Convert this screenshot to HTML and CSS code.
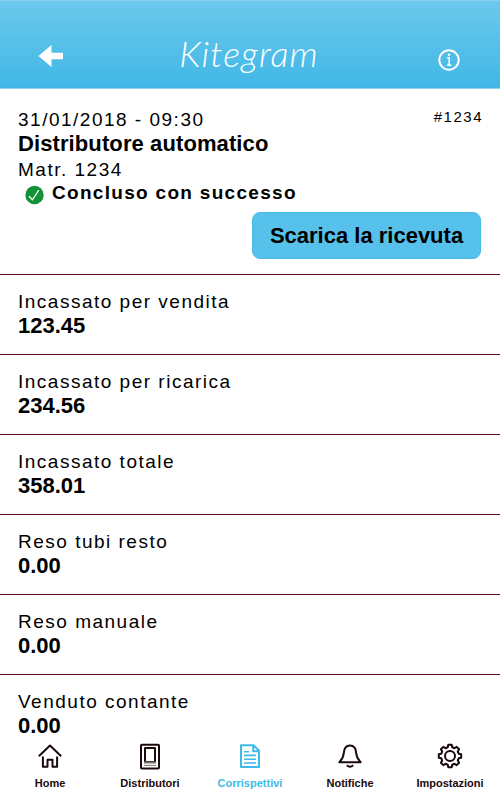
FILE: index.html
```html
<!DOCTYPE html>
<html lang="it">

<head>
  <meta charset="UTF-8">
  <meta name="viewport" content="width=device-width, initial-scale=1">
  <title>Kitegram</title>
  <link rel="stylesheet" href="styles.css">
</head>

<body>
  <header class="header">
    <a class="back" href="#" aria-label="Indietro">
      <svg width="26" height="22" viewBox="0 0 26 22"><path d="M0.5 11 L13.5 0 V7.8 H25 V14.2 H13.5 V22 Z" fill="#fff"/></svg>
    </a>
    <h1 class="logo">Kitegram</h1>
    <a class="info" href="#" aria-label="Informazioni">
      <svg width="22" height="22" viewBox="0 0 22 22" fill="none" stroke="#fff">
        <circle cx="11" cy="11" r="9.7" stroke-width="2"/>
        <path d="M9.2 8.7 H11.2 V16 M9 16.2 H13.4" stroke-width="1.5"/>
        <circle cx="11" cy="5.7" r="1.2" fill="#fff" stroke="none"/>
      </svg>
    </a>
  </header>

  <main class="content">
    <section class="summary">
      <div class="summary-top">
        <span class="label">31/01/2018 - 09:30</span>
        <span class="number">#1234</span>
      </div>
      <h2 class="value title">Distributore automatico</h2>
      <div class="label">Matr. 1234</div>
      <div class="status">
        <svg width="20" height="20" viewBox="0 0 20 20" fill="none">
          <circle cx="9.5" cy="10" r="9.2" fill="#149236"/>
          <path d="M4 11.2 L7.5 14.8 L13.8 5" stroke="#fff" stroke-width="1.3"/>
        </svg>
        <span>Concluso con successo</span>
      </div>
      <button class="download" type="button">Scarica la ricevuta</button>
    </section>

    <section class="row">
      <div class="label">Incassato per vendita</div>
      <div class="value">123.45</div>
    </section>
    <section class="row">
      <div class="label">Incassato per ricarica</div>
      <div class="value">234.56</div>
    </section>
    <section class="row">
      <div class="label">Incassato totale</div>
      <div class="value">358.01</div>
    </section>
    <section class="row">
      <div class="label">Reso tubi resto</div>
      <div class="value">0.00</div>
    </section>
    <section class="row">
      <div class="label">Reso manuale</div>
      <div class="value">0.00</div>
    </section>
    <section class="row">
      <div class="label">Venduto contante</div>
      <div class="value">0.00</div>
    </section>
  </main>

  <nav class="tabs">
    <a class="tab" href="#">
      <svg class="icon" viewBox="0 0 28 28">
        <path d="M2.8 14.2 L14 3.6 L25.2 14.2"/>
        <path d="M6.9 14.5 V24.7 H11.5 V17.7 H16.5 V24.7 H21.1 V14.5"/>
      </svg>
      <span>Home</span>
    </a>
    <a class="tab" href="#">
      <svg class="icon" viewBox="0 0 28 28">
        <rect x="5" y="2.8" width="18" height="23.8" rx="1"/>
        <path d="M9 6 H19 V20 H9 Z"/>
        <path d="M8 20.5 H20" stroke="#77716e"/>
        <path d="M8 23.4 H20" stroke="#77716e" stroke-width="1"/>
      </svg>
      <span>Distributori</span>
    </a>
    <a class="tab active" href="#">
      <svg class="icon" viewBox="0 0 28 28">
        <path d="M5 3.2 H17.5 L23 8.7 V25 H5 Z M17.2 3.7 V9.2 H22.5"/>
        <path d="M8 9.7 H13 M8 13.4 H20 M8 17.2 H20 M8 21 H20" stroke-width="1.6"/>
      </svg>
      <span>Corrispettivi</span>
    </a>
    <a class="tab" href="#">
      <svg class="icon" viewBox="0 0 28 28">
        <path d="M14 3.4 C9 3.4 8 7 7.8 11 C7.5 16 5.5 17.8 3.3 20.3 H24.7 C22.5 17.8 20.5 16 20.2 11 C20 7 19 3.4 14 3.4 Z"/>
        <path d="M10.8 23.3 Q14 26.3 17.2 23.3"/>
      </svg>
      <span>Notifiche</span>
    </a>
    <a class="tab" href="#">
      <svg class="icon" viewBox="0 0 28 28">
        <path d="M11.7 5.3 L12.3 2.8 H15.7 L16.3 5.3 L18.5 6.2 L20.7 4.9 L23.1 7.3 L21.8 9.5 L22.7 11.7 L25.2 12.3 V15.7 L22.7 16.3 L21.8 18.5 L23.1 20.7 L20.7 23.1 L18.5 21.8 L16.3 22.7 L15.7 25.2 H12.3 L11.7 22.7 L9.5 21.8 L7.3 23.1 L4.9 20.7 L6.2 18.5 L5.3 16.3 L2.8 15.7 V12.3 L5.3 11.7 L6.2 9.5 L4.9 7.3 L7.3 4.9 L9.5 6.2 Z"/>
        <circle cx="14" cy="14" r="5"/>
      </svg>
      <span>Impostazioni</span>
    </a>
  </nav>
</body>

</html>
```
FILE: styles.css
```css
* {
  box-sizing: border-box;
}

body {
  display: flex;
  flex-direction: column;
  height: 100vh;
  margin: 0;
  overflow: hidden;
  background: #fff;
  color: #000;
  font-family: "Liberation Sans", Arial, sans-serif;
}

a {
  color: inherit;
  text-decoration: none;
}

svg {
  display: block;
}

.header {
  flex: none;
  display: grid;
  grid-template-columns: 1fr auto 1fr;
  height: 89px;
  padding: 22px 40px 0 38px;
  align-items: center;
  background: linear-gradient(#6bc9ec, #41b7e6);
  border-top: 1px solid #86d0ef;
  border-bottom: 1px solid #8dd4f0;
  color: #fff;
}

.info {
  justify-self: end;
  padding-top: 9px;
}

.logo {
  margin: 0;
  padding-bottom: 5px;
  font-family: Lato, cursive;
  font-size: 36px;
  font-style: italic;
  font-weight: 300;
  letter-spacing: 1.1px;
  line-height: 40px;
}

.content {
  flex: 1;
  min-height: 0;
  overflow: hidden;
}

.summary {
  display: flex;
  flex-direction: column;
  height: 185px;
  padding: 18px 18px 0;
}

.summary-top {
  display: flex;
  justify-content: space-between;
}

.label {
  font-size: 19px;
  letter-spacing: 1.5px;
  line-height: 25px;
}

.value {
  margin: 0;
  font-size: 22px;
  font-weight: bold;
  line-height: 24px;
}

.title {
  padding-bottom: 1px;
  letter-spacing: 0.1px;
}

.number {
  margin-right: -1px;
  font-size: 15px;
  letter-spacing: 1.5px;
  line-height: 20px;
}

.status {
  display: flex;
  gap: 7px;
  padding-left: 7px;
  font-size: 19px;
  font-weight: bold;
  letter-spacing: 1.3px;
  line-height: 22px;
}

.status svg {
  margin-top: 3px;
}

.download {
  align-self: flex-end;
  width: 229px;
  height: 47px;
  margin: 7px 1px 0 0;
  padding: 0;
  border: 1px solid #48bbe8;
  border-radius: 8px;
  background: #56c1ea;
  color: #000;
  font: bold 22px "Liberation Sans", Arial, sans-serif;
}

.row {
  height: 80px;
  padding: 14px 18px;
  border-top: 1px solid #5a0a10;
}

.tabs {
  flex: none;
  display: grid;
  grid-template-columns: repeat(5, 1fr);
  height: 58px;
  background: #fff;
}

.tab {
  display: flex;
  flex-direction: column;
  align-items: center;
  color: #1a0a0c;
  font-size: 11px;
  font-weight: bold;
  line-height: 14px;
}

.tab.active {
  color: #3dbbe8;
}

.icon {
  width: 28px;
  height: 28px;
  margin-bottom: 6px;
  fill: none;
  stroke: currentColor;
  stroke-width: 2;
  stroke-linejoin: round;
}
```
